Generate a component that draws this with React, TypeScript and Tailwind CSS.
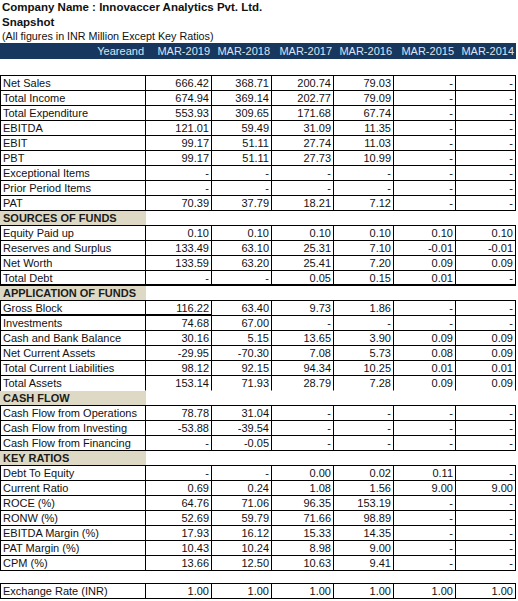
import React from 'react';

type Row = { label: string; values: string[]; bottom?: 'thick' | 'none' | 'thickLeft' };
type Block = { section?: string; rows: Row[] };

const years = ['MAR-2019', 'MAR-2018', 'MAR-2017', 'MAR-2016', 'MAR-2015', 'MAR-2014'];

const grid = 'grid grid-cols-[145px_66px_60px_62px_60px_62px_60px]';

const blocks: Block[] = [
  {
    rows: [
      { label: 'Net Sales', values: ['666.42', '368.71', '200.74', '79.03', '-', '-'] },
      { label: 'Total Income', values: ['674.94', '369.14', '202.77', '79.09', '-', '-'] },
      { label: 'Total Expenditure', values: ['553.93', '309.65', '171.68', '67.74', '-', '-'] },
      { label: 'EBITDA', values: ['121.01', '59.49', '31.09', '11.35', '-', '-'] },
      { label: 'EBIT', values: ['99.17', '51.11', '27.74', '11.03', '-', '-'] },
      { label: 'PBT', values: ['99.17', '51.11', '27.73', '10.99', '-', '-'] },
      { label: 'Exceptional Items', values: ['-', '-', '-', '-', '-', '-'] },
      { label: 'Prior Period Items', values: ['-', '-', '-', '-', '-', '-'] },
      { label: 'PAT', values: ['70.39', '37.79', '18.21', '7.12', '-', '-'] },
    ],
  },
  {
    section: 'SOURCES OF FUNDS',
    rows: [
      { label: 'Equity Paid up', values: ['0.10', '0.10', '0.10', '0.10', '0.10', '0.10'] },
      { label: 'Reserves and Surplus', values: ['133.49', '63.10', '25.31', '7.10', '-0.01', '-0.01'] },
      { label: 'Net Worth', values: ['133.59', '63.20', '25.41', '7.20', '0.09', '0.09'] },
      { label: 'Total Debt', values: ['-', '-', '0.05', '0.15', '0.01', '-'], bottom: 'thick' },
    ],
  },
  {
    section: 'APPLICATION OF FUNDS',
    rows: [
      { label: 'Gross Block', values: ['116.22', '63.40', '9.73', '1.86', '-', '-'], bottom: 'thickLeft' },
      { label: 'Investments', values: ['74.68', '67.00', '-', '-', '-', '-'] },
      { label: 'Cash and Bank Balance', values: ['30.16', '5.15', '13.65', '3.90', '0.09', '0.09'] },
      { label: 'Net Current Assets', values: ['-29.95', '-70.30', '7.08', '5.73', '0.08', '0.09'] },
      { label: 'Total Current Liabilities', values: ['98.12', '92.15', '94.34', '10.25', '0.01', '0.01'] },
      { label: 'Total Assets', values: ['153.14', '71.93', '28.79', '7.28', '0.09', '0.09'], bottom: 'none' },
    ],
  },
  {
    section: 'CASH FLOW',
    rows: [
      { label: 'Cash Flow from Operations', values: ['78.78', '31.04', '-', '-', '-', '-'] },
      { label: 'Cash Flow from Investing', values: ['-53.88', '-39.54', '-', '-', '-', '-'] },
      { label: 'Cash Flow from Financing', values: ['-', '-0.05', '-', '-', '-', '-'] },
    ],
  },
  {
    section: 'KEY RATIOS',
    rows: [
      { label: 'Debt To Equity', values: ['-', '-', '0.00', '0.02', '0.11', '-'] },
      { label: 'Current Ratio', values: ['0.69', '0.24', '1.08', '1.56', '9.00', '9.00'] },
      { label: 'ROCE (%)', values: ['64.76', '71.06', '96.35', '153.19', '-', '-'] },
      { label: 'RONW (%)', values: ['52.69', '59.79', '71.66', '98.89', '-', '-'] },
      { label: 'EBITDA Margin (%)', values: ['17.93', '16.12', '15.33', '14.35', '-', '-'] },
      { label: 'PAT Margin (%)', values: ['10.43', '10.24', '8.98', '9.00', '-', '-'] },
      { label: 'CPM (%)', values: ['13.66', '12.50', '10.63', '9.41', '-', '-'] },
    ],
  },
];

function bottomFor(row: Row, col: number) {
  if (row.bottom === 'thick') return 'border-b-2';
  if (row.bottom === 'none') return 'border-b border-b-transparent';
  if (row.bottom === 'thickLeft' && col < 2) return 'border-b-2';
  return 'border-b';
}

function DataRow({ row }: { row: Row }) {
  return (
    <div className={grid}>
      <div className={`h-[15px] border-r border-black ${bottomFor(row, 0)} pl-[2px] leading-[14px] whitespace-pre`}>
        {row.label}
      </div>
      {row.values.map((v, i) => (
        <div key={i} className={`h-[15px] border-r border-black ${bottomFor(row, i + 1)} pr-[2px] text-right leading-[14px]`}>
          {v}
        </div>
      ))}
    </div>
  );
}

function DataBlock({ rows }: { rows: Row[] }) {
  return (
    <div className="w-[516px] border-t border-l border-black">
      {rows.map((r) => (
        <DataRow key={r.label} row={r} />
      ))}
    </div>
  );
}

function SectionRow({ title }: { title: string }) {
  return (
    <div className="h-[14px] w-[146px] bg-[#ddd9c4] pl-[3px] text-[11px] font-bold leading-[14px] text-[#1c1c1c]">
      {title}
    </div>
  );
}

export default function App() {
  return (
    <div className="h-[601px] w-[518px] overflow-hidden bg-white text-[11px] text-[#111] font-['Liberation_Sans',Arial,sans-serif]">
      <div className="h-[15px] pl-[2px] text-[11.5px] font-bold leading-[15px]">Company Name : Innovaccer Analytics Pvt. Ltd.</div>
      <div className="h-[15px] pl-[2px] text-[11.5px] font-bold leading-[15px]">Snapshot</div>
      <div className="h-[13px] pl-[2px] text-[10.75px] leading-[13px]">(All figures in INR Million Except Key Ratios)</div>

      {/* year header bar */}
      <div className={`${grid} h-[16px] w-[516px] bg-[#17375e] pl-px leading-[16px] text-[#dde4ee]`}>
        <div className="pr-[2px] text-right">Yeareand</div>
        {years.map((y) => (
          <div key={y} className="pr-[2px] text-right">
            {y}
          </div>
        ))}
      </div>

      <div className="h-[16px]" />

      {blocks.map((b, i) => (
        <div key={i}>
          {b.section && <SectionRow title={b.section} />}
          <DataBlock rows={b.rows} />
        </div>
      ))}

      <div className="h-[12px]" />
      <DataBlock rows={[{ label: 'Exchange Rate (INR)', values: ['1.00', '1.00', '1.00', '1.00', '1.00', '1.00'] }]} />
    </div>
  );
}
